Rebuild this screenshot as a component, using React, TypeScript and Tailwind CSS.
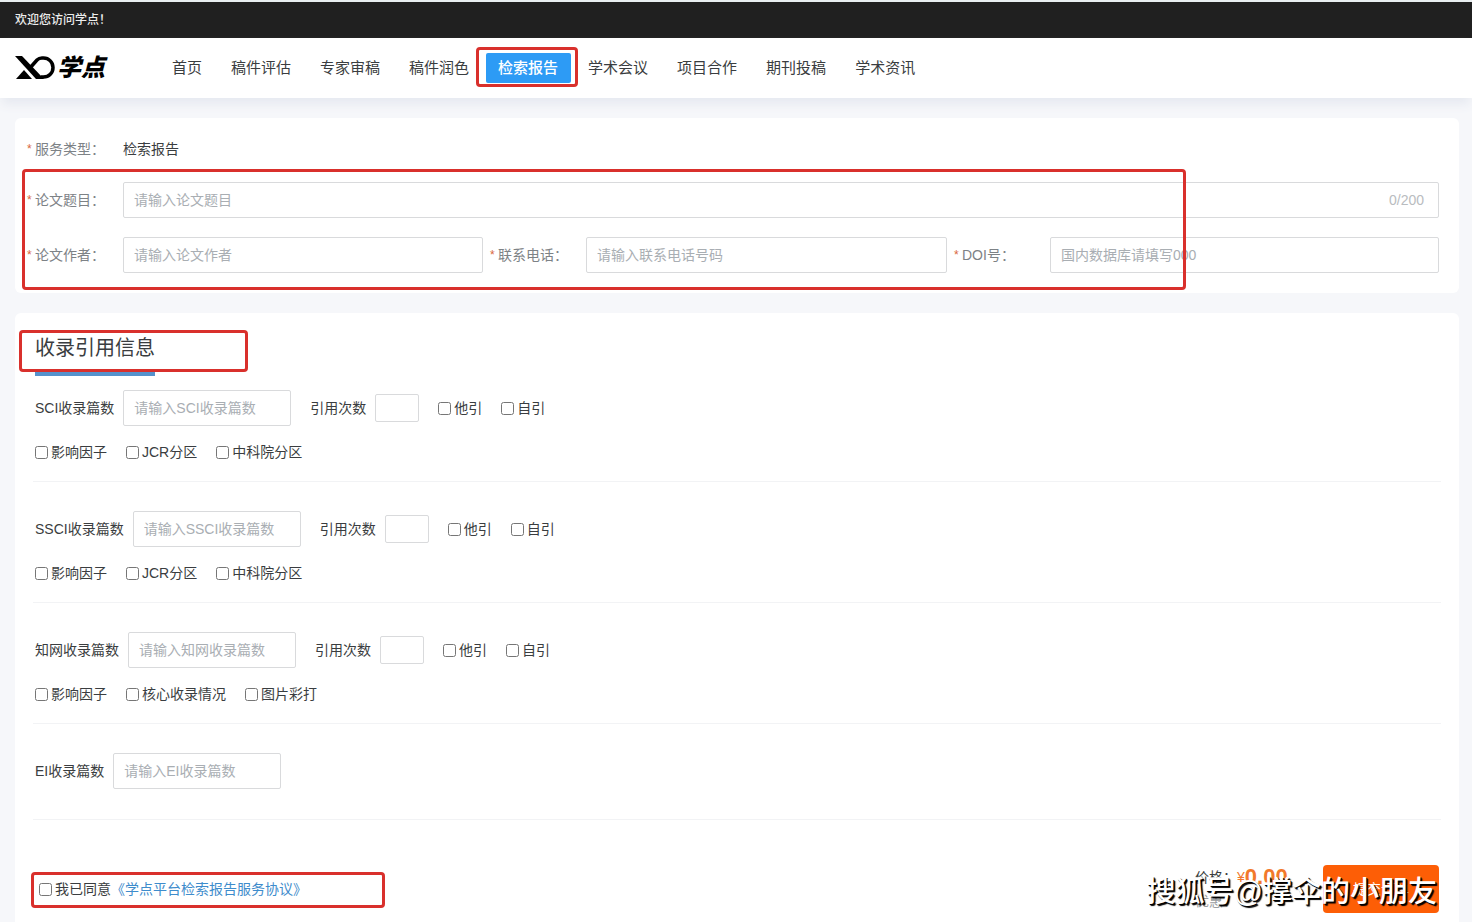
import { useState } from 'react';
import type { ReactNode } from 'react';

// ============================================================
// TYPES & CONSTANTS
// ============================================================

interface RecordGroupItem {
  id: string;
  name: string;
  options: string[];
}

const NAV_ITEMS = [
  '首页',
  '稿件评估',
  '专家审稿',
  '稿件润色',
  '检索报告',
  '学术会议',
  '项目合作',
  '期刊投稿',
  '学术资讯',
];

const ACTIVE_NAV = '检索报告';

const RECORD_GROUPS: RecordGroupItem[] = [
  { id: 'sci', name: 'SCI', options: ['影响因子', 'JCR分区', '中科院分区'] },
  { id: 'ssci', name: 'SSCI', options: ['影响因子', 'JCR分区', '中科院分区'] },
  { id: 'cnki', name: '知网', options: ['影响因子', '核心收录情况', '图片彩打'] },
];

const inputClass =
  'h-9 min-w-0 rounded-xs border border-[#d9dadc] bg-white px-2.5 text-sm text-[#333] placeholder:text-[#a9aeb3] outline-none focus:border-[#2d96f3]';

// ============================================================
// SMALL COMPONENTS
// ============================================================

/* Red outline that highlights a region of the page */
function Marker({ className }: { className: string }) {
  return (
    <span
      aria-hidden="true"
      className={`pointer-events-none absolute z-10 rounded-sm border-3 border-[#d9302c] ${className}`}
    />
  );
}

function Logo() {
  return (
    <a href="#" className="flex w-[145px] shrink-0 items-center text-black">
      <svg width="41" height="26" viewBox="0 0 41 26" fill="none" aria-hidden="true">
        <path d="M0 1H7L29 24H21Z" fill="currentColor" />
        <path d="M1 24L9 15L17 24Z" fill="currentColor" />
        <path
          d="M14.500 13.500L22 5C23.500 3.500 25 3 27 3H28.500C34 3 38 7.500 38 12.500C38 18 34 22 28.500 22H26"
          stroke="currentColor"
          strokeWidth="3.500"
        />
      </svg>
      <span className="ml-px text-2xl leading-7 font-black italic">学点</span>
    </a>
  );
}

function FieldLabel({ htmlFor, children }: { htmlFor?: string; children: ReactNode }) {
  return (
    <label htmlFor={htmlFor} className="flex w-24 shrink-0 items-center text-[#7d8286]">
      <span className="w-2 text-xs text-[#d9663c]">*</span>
      {children}
    </label>
  );
}

function CheckOption({ label }: { label: string }) {
  return (
    <label className="flex items-center gap-[3px]">
      <input type="checkbox" className="size-[13px]" />
      {label}
    </label>
  );
}

function RecordInput({ id, name }: { id: string; name: string }) {
  return (
    <div className="flex items-center gap-[9px]">
      <label htmlFor={`${id}-count`}>{name}收录篇数</label>
      <input
        id={`${id}-count`}
        type="text"
        placeholder={`请输入${name}收录篇数`}
        className={`${inputClass} w-[168px]`}
      />
    </div>
  );
}

function RecordGroup({ id, name, options }: RecordGroupItem) {
  return (
    <div className="mb-[29px] border-b border-[#f2f3f5] px-0.5 pb-[19px]">
      <div className="flex items-center gap-[19px]">
        <RecordInput id={id} name={name} />
        <div className="flex items-center gap-[9px]">
          <label htmlFor={`${id}-cited`}>引用次数</label>
          <input
            id={`${id}-cited`}
            type="text"
            className="h-7 w-11 rounded-xs border border-[#d9dadc] px-1 text-center outline-none"
          />
        </div>
        <CheckOption label="他引" />
        <CheckOption label="自引" />
      </div>
      <div className="mt-4 flex items-center gap-[19px]">
        {options.map(option => (
          <CheckOption key={option} label={option} />
        ))}
      </div>
    </div>
  );
}

// ============================================================
// PAGE
// ============================================================

export default function App() {
  const [title, setTitle] = useState('');

  return (
    <div
      lang="zh-CN"
      className="min-h-screen overflow-x-hidden bg-[#f6f7fa] font-['Liberation_Sans','Noto_Sans_CJK_SC',sans-serif] text-sm text-[#3a3d40]"
    >
      {/* --- Top bar --- */}
      <div className="border-t-2 border-[#e9eef0] bg-[#202020] px-[15px] text-xs leading-9 font-medium text-[#ececec]">
        欢迎您访问学点！
      </div>

      {/* --- Header --- */}
      <header className="relative flex h-[60px] items-center bg-white px-[15px] shadow-[0_8px_10px_-2px_#e6e9f0]">
        <Logo />
        <nav className="flex gap-[5px] text-[15px] leading-[30px] whitespace-nowrap">
          {NAV_ITEMS.map(item =>
            item === ACTIVE_NAV ? (
              <a key={item} href="#" className="relative rounded-xs bg-[#2d9bf5] pr-[13px] pl-3 font-medium text-white">
                {item}
                <Marker className="-top-1.5 -right-[7px] -bottom-1 -left-[10px]" />
              </a>
            ) : (
              <a key={item} href="#" className="px-3">
                {item}
              </a>
            ),
          )}
        </nav>
      </header>

      <main className="pt-5 pr-[13px] pl-[15px]">
        {/* --- Basic info --- */}
        <section className="relative rounded-md bg-white pt-5 pr-5 pb-5 pl-3">
          <div className="flex h-[22px] items-center">
            <FieldLabel>服务类型：</FieldLabel>
            <span>检索报告</span>
          </div>
          <div className="relative mt-[22px] flex items-center">
            <FieldLabel htmlFor="title">论文题目：</FieldLabel>
            <input
              id="title"
              type="text"
              maxLength={200}
              value={title}
              onChange={e => setTitle(e.target.value)}
              placeholder="请输入论文题目"
              className={`${inputClass} flex-1`}
            />
            <span className="absolute right-[15px] text-[#b9bcc0]">{title.length}/200</span>
          </div>
          <div className="mt-[19px] grid grid-cols-[463fr_464fr_485fr]">
            <div className="flex items-center pr-[7px]">
              <FieldLabel htmlFor="author">论文作者：</FieldLabel>
              <input id="author" type="text" placeholder="请输入论文作者" className={`${inputClass} flex-1`} />
            </div>
            <div className="flex items-center pr-[7px]">
              <FieldLabel htmlFor="phone">联系电话：</FieldLabel>
              <input id="phone" type="tel" placeholder="请输入联系电话号码" className={`${inputClass} flex-1`} />
            </div>
            <div className="flex items-center">
              <FieldLabel htmlFor="doi">DOI号：</FieldLabel>
              <input id="doi" type="text" placeholder="国内数据库请填写000" className={`${inputClass} flex-1`} />
            </div>
          </div>
          <Marker className="top-[51px] right-[273px] bottom-[3px] left-[7px]" />
        </section>

        {/* --- Inclusion and citation info --- */}
        <section className="mt-5 rounded-t-md bg-white px-[18px] pt-[21px]">
          <div className="relative mb-3.5 flex px-0.5">
            <h2 className="border-b-4 border-[#5592cc] pb-2.5 text-xl leading-7">收录引用信息</h2>
            <Marker className="-top-1 -left-[14px] h-[42px] w-[229px]" />
          </div>

          {RECORD_GROUPS.map(group => (
            <RecordGroup key={group.id} {...group} />
          ))}

          <div className="border-b border-[#f2f3f5] px-0.5 pb-[30px]">
            <RecordInput id="ei" name="EI" />
          </div>

          {/* --- Agreement & submit --- */}
          <div className="relative flex h-[102px] items-center justify-between pt-[36px] pr-0.5 pl-1.5">
            <div className="relative flex items-center">
              <CheckOption label="我已同意" />
              <a href="#" className="text-[#3e8ccc]">
                《学点平台检索报告服务协议》
              </a>
              <Marker className="-top-[7px] -left-2 h-9 w-[354px]" />
            </div>
            <div className="flex items-center">
              <div className="mr-[35px] w-[93px] whitespace-nowrap">
                <div className="flex items-center leading-6">
                  价格：
                  <span className="text-[#f2792b]">¥</span>
                  <strong className="text-[22px] text-[#f2792b]">0.00</strong>
                </div>
                <div className="leading-6 text-[#9a9da0]">优惠：</div>
              </div>
              <button type="button" className="h-12 w-[116px] rounded-sm bg-[#fd5e06] text-sm text-white">
                提交订单
              </button>
            </div>
            <span className="pointer-events-none absolute right-1 bottom-3 text-[29px] leading-9 font-medium whitespace-nowrap text-white [text-shadow:2px_2px_1px_#000,1px_1px_0_#000]">
              搜狐号@撑伞的小朋友
            </span>
          </div>
        </section>
      </main>
    </div>
  );
}
